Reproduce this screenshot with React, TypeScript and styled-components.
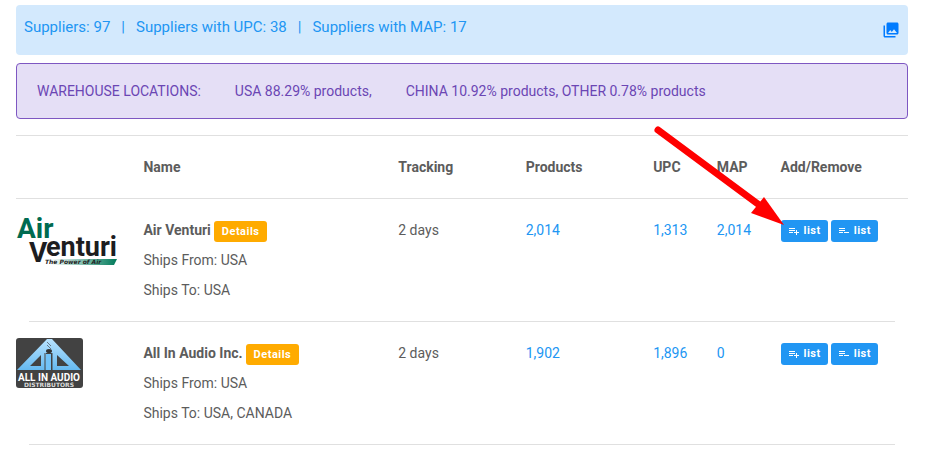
import React from "react";
import styled, { createGlobalStyle } from "styled-components";

const GlobalStyle = createGlobalStyle`
  * { box-sizing: border-box; }
  body {
    margin: 0;
    background: #fff;
    color: #5c5c5c;
    font: 14px/30px Roboto, "Liberation Sans", sans-serif;
  }
`;

const Page = styled.main`
  padding: 5px 19px 0 16px;
`;

const SummaryBar = styled.section`
  display: flex;
  justify-content: space-between;
  align-items: flex-start;
  min-height: 50px;
  padding: 7px 8px;
  border-radius: 4px;
  background: #d3e9fd;
  color: #2196f3;
  font-size: 15px;
`;

const SummaryList = styled.div`
  display: flex;
  gap: 11px;
  line-height: 30px;
`;

const GalleryButton = styled.button`
  display: flex;
  margin-top: 9px;
  padding: 0;
  border: 0;
  background: none;
  color: #007bff;
  cursor: pointer;
`;

const WarehouseBar = styled.section`
  display: flex;
  align-items: center;
  min-height: 56px;
  margin: 8px 0 16px;
  padding: 0 20px;
  border: 1px solid #7e57c2;
  border-radius: 4px;
  background: #e5dff6;
  color: #6b46b4;
  white-space: pre;
`;

const Location = styled.span<{ $gap?: boolean }>`
  margin-left: ${(p) => (p.$gap ? "34px" : "0")};
`;

const Table = styled.table`
  width: 100%;
  table-layout: fixed;
  border-collapse: collapse;
`;

const Column = styled.col<{ $units: number }>`
  width: ${(p) => (p.$units * 100) / 14}%;
`;

const HeadCell = styled.th`
  height: 63px;
  padding: 0;
  border: solid #e0e0e0;
  border-width: 1px 0;
  text-align: left;
  font-weight: 700;
  white-space: nowrap;
`;

const Cell = styled.td`
  padding: 16px 0;
  vertical-align: top;
  white-space: nowrap;
`;

const LogoCell = styled(Cell)`
  line-height: 0;
`;

const Logo = styled.svg`
  overflow: visible;
`;

const DividerCell = styled.td`
  height: 1px;
  padding: 0 13px;
  line-height: 0;
`;

const Divider = styled.hr`
  height: 1px;
  margin: 0;
  border: 0;
  background: #e0e0e0;
`;

const NameLine = styled.div`
  display: flex;
  align-items: flex-start;
  gap: 3px;
`;

const CountLink = styled.a`
  color: #2196f3;
  text-decoration: none;
`;

const SmallButton = styled.button<{ $tone: "amber" | "blue" }>`
  display: inline-flex;
  align-items: center;
  gap: 4px;
  height: ${(p) => (p.$tone === "amber" ? 21 : 22)}px;
  margin-top: ${(p) => (p.$tone === "amber" ? 6 : 5)}px;
  padding: 0 ${(p) => (p.$tone === "amber" ? 8 : 7)}px;
  border: 0;
  border-radius: 3px;
  background: ${(p) => (p.$tone === "amber" ? "#ffab00" : "#2196f3")};
  color: #fff;
  font: 700 11px/20px Roboto, sans-serif;
  letter-spacing: 0.5px;
  cursor: pointer;
`;

const Actions = styled.div`
  position: relative;
  display: flex;
  align-items: flex-start;
  gap: 3px;
  height: 30px;
`;

const Arrow = styled.svg`
  position: absolute;
  right: 100%;
  bottom: 20px;
  margin-right: -3px;
  pointer-events: none;
`;

const AirVenturiLogo = () => (
  <Logo width="102" height="50" viewBox="0 0 102 50" role="img" aria-label="Air Venturi">
    <defs>
      <linearGradient id="tagline" x1="0" x2="1">
        <stop offset="0" stopColor="#fff" />
        <stop offset="1" stopColor="#007a5a" />
      </linearGradient>
    </defs>
    <path d="M36 44H101L98 50H34Z" fill="url(#tagline)" />
    <g fontFamily="Roboto, sans-serif" fontWeight="700">
      <text x="1" y="23" fontSize="28" fill="#006b50">Air</text>
      <text x="13" y="47" fontSize="28" fill="#1d1d1f">V</text>
      <text x="30" y="41" fontSize="27" fill="#1d1d1f">enturi</text>
    </g>
    <text x="29" y="49" fontSize="6" fontWeight="700" fontStyle="italic" fontFamily="DejaVu Sans, sans-serif" fill="#222">The  Power  of  Air</text>
  </Logo>
);

const AllInAudioLogo = () => (
  <Logo width="67" height="50" viewBox="0 0 67 50" role="img" aria-label="All In Audio Distributors">
    <defs>
      <linearGradient id="pyramid" x1="0" y1="0" x2="0" y2="1">
        <stop offset="0" stopColor="#b8e3ff" />
        <stop offset="1" stopColor="#65b9f0" />
      </linearGradient>
    </defs>
    <rect width="67" height="50" rx="3" fill="#424242" />
    <path d="M31 1H36L65 32H36V15H30V32H1Z" fill="url(#pyramid)" />
    <path d="M14 28L25 17V28ZM41 17L53 28H41Z" fill="#424242" />
    <path d="M30 16H35V32H30Z" fill="#72c3f8" />
    <path d="M29 15V32M36 15V32" stroke="#424242" strokeWidth="1" />
    <path d="M31 4L35 8M31 7L35 11" stroke="#66798a" strokeWidth="1" />
    <ellipse cx="33" cy="13" rx="3" ry="2" fill="#333" />
    <text x="33" y="43" textAnchor="middle" fontFamily="Roboto, sans-serif" fontWeight="700" fontSize="10" fill="#fff">ALL IN AUDIO</text>
    <text x="33" y="49" textAnchor="middle" fontFamily="DejaVu Sans, sans-serif" fontWeight="700" fontSize="6" fill="#ddd">DISTRIBUTORS</text>
  </Logo>
);

const GalleryIcon = () => (
  <svg width="18" height="18" viewBox="0 0 24 24" fill="currentColor" aria-hidden="true">
    <path d="M22 16V4c0-1.1-.9-2-2-2H8c-1.1 0-2 .9-2 2v12c0 1.1.9 2 2 2h12c1.1 0 2-.9 2-2zm-11-4l2.03 2.71L16 11l4 5H8l3-4zM2 6v14c0 1.1.9 2 2 2h14v-2H4V6H2z" />
  </svg>
);

const PlaylistIcon = ({ kind }: { kind: "add" | "remove" }) => (
  <svg width="12" height="12" viewBox="0 0 12 12" fill="none" stroke="currentColor" aria-hidden="true">
    <path
      d={
        kind === "add"
          ? "M1 3.5H7M1 5.5H7M1 7.5H5M6 7.5H11M8.5 5V10"
          : "M1 3.5H7M1 5.5H7M1 7.5H5M6 7.5H11"
      }
      strokeWidth="1"
    />
  </svg>
);

const PointerArrow = () => (
  <Arrow width="130" height="100" viewBox="0 0 130 100" aria-hidden="true">
    <path d="M4 5L108 82" stroke="#f00" strokeWidth="7" strokeLinecap="round" />
    <path d="M130 100L97 88L110 72Z" fill="#f00" />
  </Arrow>
);

const suppliers = [
  { name: "Air Venturi", Mark: AirVenturiLogo, to: "USA", products: "2,014", upc: "1,313", map: "2,014", marked: true },
  { name: "All In Audio Inc.", Mark: AllInAudioLogo, to: "USA, CANADA", products: "1,902", upc: "1,896", map: "0", marked: false },
];

export default function App() {
  return (
    <>
      <GlobalStyle />
      <Page>
        <SummaryBar>
          <SummaryList>
            <span>Suppliers: 97</span>
            <span>|</span>
            <span>Suppliers with UPC: 38</span>
            <span>|</span>
            <span>Suppliers with MAP: 17</span>
          </SummaryList>
          <GalleryButton aria-label="Gallery"><GalleryIcon /></GalleryButton>
        </SummaryBar>
        <WarehouseBar>
          <Location>WAREHOUSE LOCATIONS:</Location>
          <Location $gap>USA 88.29% products,</Location>
          <Location $gap>CHINA 10.92% products, </Location>
          <Location>OTHER 0.78% products</Location>
        </WarehouseBar>
        <Table>
          <colgroup>
            {[2, 4, 2, 2, 1, 1, 2].map((units, i) => <Column key={i} $units={units} />)}
          </colgroup>
          <thead>
            <tr>
              {["", "Name", "Tracking", "Products", "UPC", "MAP", "Add/Remove"].map((h) => (
                <HeadCell key={h} scope="col">{h}</HeadCell>
              ))}
            </tr>
          </thead>
          <tbody>
            {suppliers.map(({ name, Mark, to, products, upc, map, marked }) => (
              <React.Fragment key={name}>
                <tr>
                  <LogoCell><Mark /></LogoCell>
                  <Cell>
                    <NameLine>
                      <b>{name}</b>
                      <SmallButton $tone="amber">Details</SmallButton>
                    </NameLine>
                    <div>Ships From: USA</div>
                    <div>Ships To: {to}</div>
                  </Cell>
                  <Cell>2 days</Cell>
                  <Cell><CountLink href="#products">{products}</CountLink></Cell>
                  <Cell><CountLink href="#upc">{upc}</CountLink></Cell>
                  <Cell><CountLink href="#map">{map}</CountLink></Cell>
                  <Cell>
                    <Actions>
                      <SmallButton $tone="blue"><PlaylistIcon kind="add" />list</SmallButton>
                      <SmallButton $tone="blue"><PlaylistIcon kind="remove" />list</SmallButton>
                      {marked && <PointerArrow />}
                    </Actions>
                  </Cell>
                </tr>
                <tr><DividerCell colSpan={7}><Divider /></DividerCell></tr>
              </React.Fragment>
            ))}
          </tbody>
        </Table>
      </Page>
    </>
  );
}
